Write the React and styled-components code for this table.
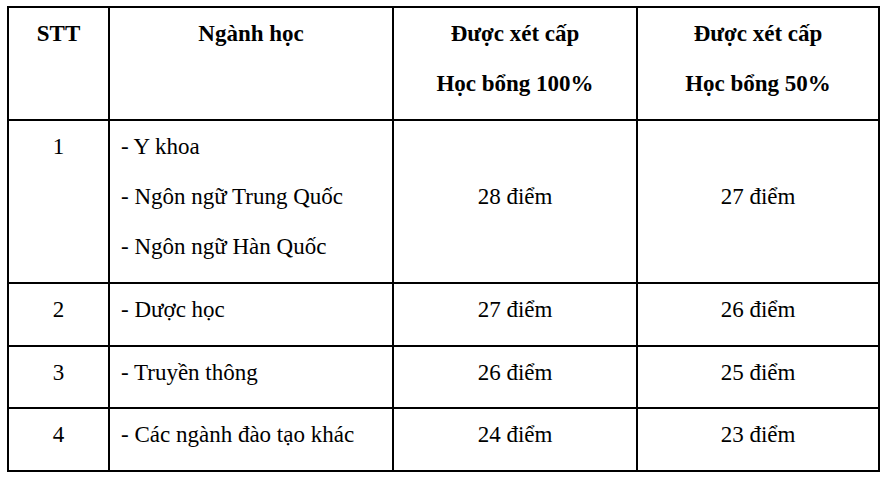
import styled, { createGlobalStyle } from 'styled-components';

const GlobalStyle = createGlobalStyle`
  html, body {
    margin: 0;
    padding: 0;
    background: #fff;
  }
  body {
    font-family: 'Liberation Serif', 'Times New Roman', serif;
    color: #000;
  }
`;

const Page = styled.div`
  padding: 6px 0 0 7px;
`;

const Table = styled.div`
  display: grid;
  grid-template-columns: 101px 284px 244px 242px;
  grid-template-rows: 113px 163px 63px 62px 63px;
  width: 873px;
  box-sizing: border-box;
  border-left: 2px solid #000;
  border-top: 2px solid #000;
  font-size: 23px;
  line-height: 50px;
`;

const Cell = styled.div`
  box-sizing: border-box;
  border-right: 2px solid #000;
  border-bottom: 2px solid #000;
  padding: 1px 0 0 ${(p) => (p.$left ? '11px' : '0')};
  text-align: ${(p) => (p.$left ? 'left' : 'center')};
  font-weight: ${(p) => (p.$head ? 700 : 400)};
  display: flex;
  flex-direction: column;
  justify-content: ${(p) => (p.$middle ? 'center' : 'flex-start')};
  padding-bottom: ${(p) => (p.$middle ? '10px' : '0')};
`;

const Line = styled.div`
  white-space: nowrap;
`;

const rows = [
  { stt: '1', majors: ['- Y khoa', '- Ngôn ngữ Trung Quốc', '- Ngôn ngữ Hàn Quốc'], full: '28 điểm', half: '27 điểm' },
  { stt: '2', majors: ['- Dược học'], full: '27 điểm', half: '26 điểm' },
  { stt: '3', majors: ['- Truyền thông'], full: '26 điểm', half: '25 điểm' },
  { stt: '4', majors: ['- Các ngành đào tạo khác'], full: '24 điểm', half: '23 điểm' },
];

export default function App() {
  return (
    <>
      <GlobalStyle />
      <Page>
        <Table>
          <Cell $head>
            <Line>STT</Line>
          </Cell>
          <Cell $head>
            <Line>Ngành học</Line>
          </Cell>
          <Cell $head>
            <Line>Được xét cấp</Line>
            <Line>Học bổng 100%</Line>
          </Cell>
          <Cell $head>
            <Line>Được xét cấp</Line>
            <Line>Học bổng 50%</Line>
          </Cell>

          {rows.map((r) => [
            <Cell key={r.stt + 'a'}>
              <Line>{r.stt}</Line>
            </Cell>,
            <Cell key={r.stt + 'b'} $left>
              {r.majors.map((m) => (
                <Line key={m}>{m}</Line>
              ))}
            </Cell>,
            <Cell key={r.stt + 'c'} $middle={r.majors.length > 1}>
              <Line>{r.full}</Line>
            </Cell>,
            <Cell key={r.stt + 'd'} $middle={r.majors.length > 1}>
              <Line>{r.half}</Line>
            </Cell>,
          ])}
        </Table>
      </Page>
    </>
  );
}
